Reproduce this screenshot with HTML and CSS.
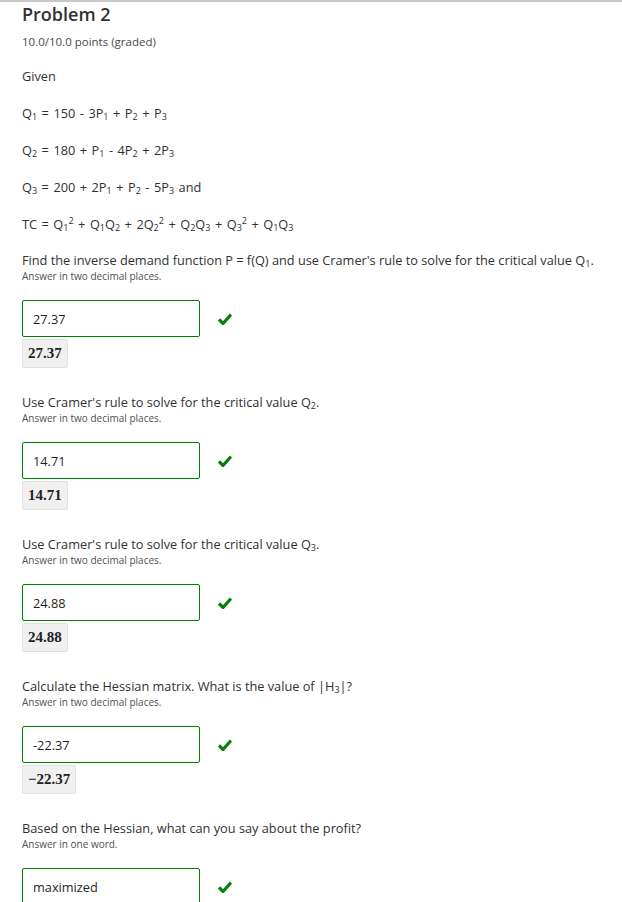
FILE: index.html
```html
<!DOCTYPE html>
<html>
<head>
<meta charset="utf-8">
<link rel="stylesheet" href="styles.css">
</head>
<body>
<div class="problem">
  <h2 class="title">Problem 2</h2>
  <div class="points">10.0/10.0 points (graded)</div>
  <p class="line given">Given</p>
  <p class="line eq">Q<sub>1</sub> = 150 - 3P<sub>1</sub> + P<sub>2</sub> + P<sub>3</sub></p>
  <p class="line eq">Q<sub>2</sub> = 180 + P<sub>1</sub> - 4P<sub>2</sub> + 2P<sub>3</sub></p>
  <p class="line eq">Q<sub>3</sub> = 200 + 2P<sub>1</sub> + P<sub>2</sub> - 5P<sub>3</sub> and</p>
  <p class="line eq">TC = Q<sub>1</sub><sup>2</sup> + Q<sub>1</sub>Q<sub>2</sub> + 2Q<sub>2</sub><sup>2</sup> + Q<sub>2</sub>Q<sub>3</sub> + Q<sub>3</sub><sup>2</sup> + Q<sub>1</sub>Q<sub>3</sub></p>

  <div class="question first">
    <div class="qtext">Find the inverse demand function P = f(Q) and use Cramer's rule to solve for the critical value Q<sub>1</sub>.</div>
    <div class="hint">Answer in two decimal places.</div>
    <div class="answer-row"><div class="input">27.37</div><span class="check"><svg width="14" height="12" viewBox="0 0 14 12"><path d="M1 6.5 L5 10.5 L13 1.5" fill="none" stroke="#0a7d0a" stroke-width="3.2"/></svg></span></div>
    <div class="preview">27.37</div>
  </div>

  <div class="question">
    <div class="qtext">Use Cramer's rule to solve for the critical value Q<sub>2</sub>.</div>
    <div class="hint">Answer in two decimal places.</div>
    <div class="answer-row"><div class="input">14.71</div><span class="check"><svg width="14" height="12" viewBox="0 0 14 12"><path d="M1 6.5 L5 10.5 L13 1.5" fill="none" stroke="#0a7d0a" stroke-width="3.2"/></svg></span></div>
    <div class="preview">14.71</div>
  </div>

  <div class="question">
    <div class="qtext">Use Cramer's rule to solve for the critical value Q<sub>3</sub>.</div>
    <div class="hint">Answer in two decimal places.</div>
    <div class="answer-row"><div class="input">24.88</div><span class="check"><svg width="14" height="12" viewBox="0 0 14 12"><path d="M1 6.5 L5 10.5 L13 1.5" fill="none" stroke="#0a7d0a" stroke-width="3.2"/></svg></span></div>
    <div class="preview">24.88</div>
  </div>

  <div class="question">
    <div class="qtext">Calculate the Hessian matrix. What is the value of |H<sub>3</sub>|?</div>
    <div class="hint">Answer in two decimal places.</div>
    <div class="answer-row"><div class="input">-22.37</div><span class="check"><svg width="14" height="12" viewBox="0 0 14 12"><path d="M1 6.5 L5 10.5 L13 1.5" fill="none" stroke="#0a7d0a" stroke-width="3.2"/></svg></span></div>
    <div class="preview">&minus;22.37</div>
  </div>

  <div class="question">
    <div class="qtext">Based on the Hessian, what can you say about the profit?</div>
    <div class="hint">Answer in one word.</div>
    <div class="answer-row"><div class="input">maximized</div><span class="check"><svg width="14" height="12" viewBox="0 0 14 12"><path d="M1 6.5 L5 10.5 L13 1.5" fill="none" stroke="#0a7d0a" stroke-width="3.2"/></svg></span></div>
  </div>
</div>
</body>
</html>
```

FILE: styles.css
```css
html, body {
  margin: 0;
  padding: 0;
  background: #fff;
}
body {
  font-family: "Open Sans", "Noto Sans", sans-serif;
  color: #313131;
  border-top: 2px solid #c8c8c8;
}
.problem {
  padding-left: 22px;
}
.title {
  margin: 0;
  padding-top: 1px;
  font-size: 18px;
  line-height: 22px;
  font-weight: 600;
  color: #313131;
}
.points {
  margin-top: 9px;
  font-size: 11.5px;
  line-height: 16px;
  color: #4a4a4a;
}
.line {
  margin: 16px 0 0;
  font-size: 12.75px;
  line-height: 21px;
}
.eq {
  word-spacing: 1.2px;
}
.given {
  margin-top: 16px;
}
sub {
  font-size: 9px;
  vertical-align: -2px;
  line-height: 0;
}
sup {
  font-size: 9px;
  vertical-align: 5px;
  line-height: 0;
}
.question {
  margin-top: 25px;
}
.question.first {
  margin-top: 16px;
}
.qtext {
  font-size: 12.75px;
  line-height: 18px;
}
.hint {
  font-size: 10px;
  line-height: 14px;
  color: #4f4f4f;
}
.answer-row {
  display: flex;
  align-items: center;
  margin-top: 17px;
}
.input {
  box-sizing: border-box;
  width: 178px;
  height: 37px;
  border: 1px solid #008000;
  border-radius: 2px;
  padding-left: 10px;
  display: flex;
  align-items: center;
  font-size: 12.75px;
  color: #1f1f1f;
}
.check {
  display: flex;
  margin-left: 18px;
}
.preview {
  display: inline-block;
  box-sizing: border-box;
  margin-top: 2px;
  height: 29px;
  padding: 0 5px;
  background: #f0f0f0;
  border: 1px solid #e2e2e2;
  border-radius: 2px;
  font-family: "Liberation Serif", "DejaVu Serif", serif;
  font-weight: bold;
  font-size: 15px;
  line-height: 27px;
  color: #222;
}
```
